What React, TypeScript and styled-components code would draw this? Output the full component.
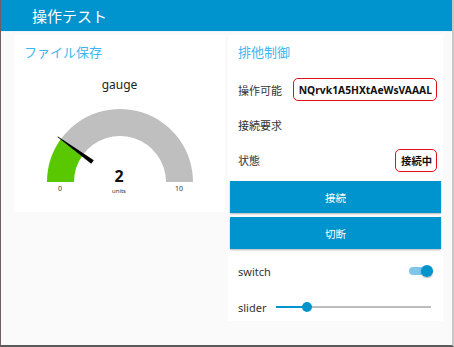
import React from "react";
import styled, { createGlobalStyle } from "styled-components";

const Global = createGlobalStyle`
  html, body { margin: 0; padding: 0; background: #fafafa; }
  body { font-family: "Noto Sans", "Noto Sans CJK JP", sans-serif; color: #333; }
  * { box-sizing: border-box; }
`;

const Frame = styled.div`
  width: 454px;
  height: 347px;
  background: #fafafa;
  border-left: 1px solid #6f5f68;
  border-right: 2px solid #c8c8c8;
  border-bottom: 2px solid #5a5a5a;
  display: flex;
  flex-direction: column;
  overflow: hidden;
`;

const Header = styled.div`
  height: 32px;
  flex: none;
  background: #0094ce;
  color: #fff;
  font-size: 15px;
  display: flex;
  align-items: center;
  padding-left: 31px;
  border-bottom: 1px solid #e8f4fa;
`;

const Main = styled.div`
  display: grid;
  grid-template-columns: 211px 215px;
  column-gap: 3px;
  align-items: start;
  padding: 3px 0 0 13px;
`;

const Card = styled.div<{ $h: number }>`
  background: #fff;
  height: ${(p) => p.$h}px;
  display: flex;
  flex-direction: column;
`;

const CardTitle = styled.div`
  height: 32px;
  flex: none;
  display: flex;
  align-items: center;
  padding-left: 10px;
  font-size: 13px;
  color: #3cb6f2;
`;

const GaugeLabel = styled.div`
  text-align: center;
  font-size: 12px;
  color: #222;
  height: 32px;
  padding-top: 10px;
  line-height: 16px;
`;

const Row = styled.div<{ $h?: number }>`
  height: ${(p) => p.$h ?? 35}px;
  flex: none;
  display: flex;
  align-items: center;
  justify-content: space-between;
  padding: 0 6px 0 10px;
  font-size: 11px;
`;

const ValueBox = styled.div`
  border: 1px solid #e0101a;
  border-radius: 5px;
  font-weight: 700;
  font-size: 10.3px;
  color: #111;
  height: 23px;
  display: flex;
  align-items: center;
  padding: 0 4px 0 5px;
`;

const Buttons = styled.div`
  display: flex;
  flex-direction: column;
  gap: 4px;
  padding: 3px 2px 0;
`;

const Button = styled.button`
  height: 32px;
  border: none;
  background: #0094ce;
  color: #fff;
  font-family: inherit;
  font-size: 10.5px;
  box-shadow: 0 1px 2px rgba(0, 0, 0, 0.3);
  padding: 0;
`;

const ControlRow = styled.div`
  height: 36px;
  flex: none;
  display: flex;
  align-items: center;
  gap: 10px;
  padding: 0 10px;
  font-size: 11px;
`;

const Spacer = styled.div`
  flex: 1;
`;

const SwitchTrack = styled.div`
  position: relative;
  width: 18px;
  height: 8px;
  border-radius: 4px;
  background: #7fc6ea;
  margin-right: 6px;
`;

const SwitchThumb = styled.div`
  position: absolute;
  right: -6px;
  top: -2px;
  width: 12px;
  height: 12px;
  border-radius: 50%;
  background: #0094ce;
  box-shadow: 0 1px 2px rgba(0, 0, 0, 0.3);
`;

const SliderTrack = styled.div`
  position: relative;
  flex: 1;
  height: 2px;
  background: #bdbdbd;
  margin-right: 2px;
`;

const SliderFill = styled.div`
  position: absolute;
  left: 0;
  top: 0;
  height: 2px;
  background: #0094ce;
`;

const SliderThumb = styled.div`
  position: absolute;
  top: -4px;
  width: 10px;
  height: 10px;
  margin-left: -5px;
  border-radius: 50%;
  background: #0094ce;
`;

const Gauge = () => {
  const cx = 106, cy = 83, ro = 73, ri = 46;
  const th = (36 * Math.PI) / 180;
  const pt = (r: number) => [cx - r * Math.cos(th), cy - r * Math.sin(th)];
  const [ox, oy] = pt(ro);
  const [ix, iy] = pt(ri);
  const green = `M ${cx - ro} ${cy} A ${ro} ${ro} 0 0 1 ${ox} ${oy} L ${ix} ${iy} A ${ri} ${ri} 0 0 0 ${cx - ri} ${cy} Z`;
  const gray = `M ${ox} ${oy} A ${ro} ${ro} 0 0 1 ${cx + ro} ${cy} L ${cx + ri} ${cy} A ${ri} ${ri} 0 0 0 ${ix} ${iy} Z`;
  const u = [-Math.cos(th), -Math.sin(th)];
  const n = [Math.sin(th), -Math.cos(th)];
  const a = [cx + u[0] * 34, cy + u[1] * 34];
  const b = [cx + u[0] * 77, cy + u[1] * 77];
  const needle = `M ${a[0] + n[0] * 2.2} ${a[1] + n[1] * 2.2} L ${b[0] + n[0] * 0.4} ${b[1] + n[1] * 0.4} L ${b[0] - n[0] * 0.4} ${b[1] - n[1] * 0.4} L ${a[0] - n[0] * 2.2} ${a[1] - n[1] * 2.2} Z`;
  return (
    <svg width="211" height="113" viewBox="0 0 211 113">
      <path d={gray} fill="#bfbfbf" />
      <path d={green} fill="#5ac800" />
      <path d={needle} fill="#000" />
      <text x="105" y="83" textAnchor="middle" fontSize="16" fontWeight="700" fill="#111" fontFamily="Noto Sans, sans-serif">2</text>
      <text x="105" y="94" textAnchor="middle" fontSize="6" fill="#333" fontFamily="Noto Sans, sans-serif">units</text>
      <text x="46" y="92" textAnchor="middle" fontSize="7" fill="#333" fontFamily="Noto Sans, sans-serif">0</text>
      <text x="165" y="92" textAnchor="middle" fontSize="7" fill="#333" fontFamily="Noto Sans, sans-serif">10</text>
    </svg>
  );
};

export default function App() {
  const slider = 20;
  return (
    <>
      <Global />
      <Frame>
        <Header>操作テスト</Header>
        <Main>
          <Card $h={177}>
            <CardTitle>ファイル保存</CardTitle>
            <GaugeLabel>gauge</GaugeLabel>
            <Gauge />
          </Card>
          <Card $h={286}>
            <CardTitle>排他制御</CardTitle>
            <Row style={{ marginTop: 5 }}>
              <span>操作可能</span>
              <ValueBox>NQrvk1A5HXtAeWsVAAAL</ValueBox>
            </Row>
            <Row>
              <span>接続要求</span>
            </Row>
            <Row $h={36}>
              <span>状態</span>
              <ValueBox>接続中</ValueBox>
            </Row>
            <Buttons>
              <Button>接続</Button>
              <Button>切断</Button>
            </Buttons>
            <ControlRow style={{ marginTop: 4 }}>
              <span>switch</span>
              <Spacer />
              <SwitchTrack>
                <SwitchThumb />
              </SwitchTrack>
            </ControlRow>
            <ControlRow>
              <span>slider</span>
              <SliderTrack>
                <SliderFill style={{ width: `${slider}%` }} />
                <SliderThumb style={{ left: `${slider}%` }} />
              </SliderTrack>
            </ControlRow>
          </Card>
        </Main>
      </Frame>
    </>
  );
}
